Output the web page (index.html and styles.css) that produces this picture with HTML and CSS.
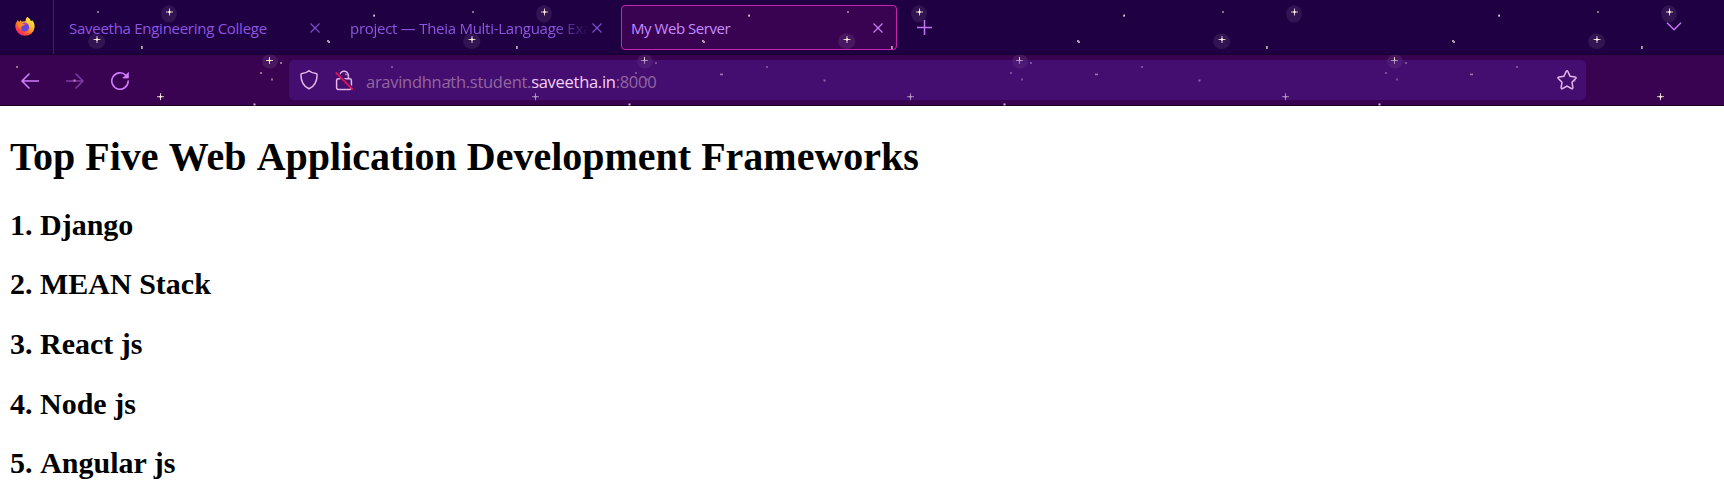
FILE: index.html
```html
<!DOCTYPE html>
<html lang="en">
<head>
<meta charset="utf-8">
<title>My Web Server</title>
<link rel="stylesheet" href="styles.css">
</head>
<body>
<header class="chrome">
  <svg class="stars" width="1724" height="106" aria-hidden="true">
    <defs>
      <g id="cross"><path d="M-3 0H4M.5 -3.5V3.5" stroke="#e0bfca" stroke-width="1"/><path d="M-1 0H2M.5 -1.5V1.5" stroke="#fff6d8" stroke-width="1.1"/></g>
      <pattern id="sky" width="375" height="106" patternUnits="userSpaceOnUse">
        <ellipse cx="169" cy="13.8" rx="7.8" ry="8.6" fill="#fff" opacity=".08"/>
        <ellipse cx="96.7" cy="41.2" rx="8.6" ry="7.8" fill="#fff" opacity=".08"/>
        <ellipse cx="270" cy="61.5" rx="7.8" ry="7" fill="#fff" opacity=".08"/>
        <use href="#cross" x="169" y="12"/>
        <use href="#cross" x="96.5" y="39.5"/>
        <use href="#cross" x="269" y="60.5"/>
        <use href="#cross" x="160" y="96.7"/>
        <g fill="#e0c6cf">
          <rect x="97" y="11" width="2" height="2" opacity=".55"/>
          <rect x="141" y="46" width="1.8" height="3" opacity=".8"/>
          <path d="M327 40h2v1h1v2h-2v-1h-1z" opacity=".75"/>
          <rect x="373.2" y="14.6" width="1.8" height="2"/>
          <rect x="280" y="62" width="2" height="2" opacity=".55"/>
          <rect x="260" y="72" width="2" height="2" opacity=".55"/>
          <rect x="271" y="78.5" width="2" height="2" opacity=".55"/>
          <rect x="16" y="66" width="2" height="2" opacity=".55"/>
          <rect x="73.5" y="79.5" width="2" height="2" opacity=".75"/>
          <rect x="345" y="73.6" width="3" height="1.6" opacity=".9"/>
          <rect x="253.5" y="103.5" width="2" height="2" opacity=".9"/>
        </g>
      </pattern>
    </defs>
    <rect width="1724" height="106" fill="url(#sky)"/>
  </svg>

  <div class="tabbar">
    <div class="view">
      <svg width="20" height="20" viewBox="0 0 20 20">
        <defs>
          <linearGradient id="fire" x1=".85" y1=".1" x2=".2" y2=".95">
            <stop offset="0" stop-color="#fff044"/><stop offset=".35" stop-color="#ffb82e"/><stop offset=".65" stop-color="#ff6a2c"/><stop offset="1" stop-color="#f5156c"/>
          </linearGradient>
        </defs>
        <path d="M12.300 0C14.600 1.400 15.600 2.800 16 4.300L17.200 3.200C19 5.100 19.800 7.600 19.600 10.200A9.700 9.700 0 0 1 .3 10C.3 7.300 1 5.700 2.200 4.300L2.700 3.100L4.200 5L5.600 3.300L6.700 4.700C8.600 4.300 10 4.500 10.600 4.300C10.500 2.500 11.200 1 12.300 0Z" fill="url(#fire)"/>
        <circle cx="9.800" cy="10.300" r="4.300" fill="#6b45d9"/>
        <path d="M7 6.600C9 4.700 12.200 5.200 13.600 8.300C12.400 7.200 11 7.200 10.200 8C9 9 8 8 5.600 8.700Z" fill="#b03bc7"/>
        <path d="M3 5.500L6.600 4.700C7 6.200 8.200 6.900 9.800 7.300C9.600 8.600 7.800 8.600 6.800 9.300C6 10 6 11.500 6.700 12.600C4 11.500 2.500 8.500 3 5.500Z" fill="#ff8a24"/>
      </svg>
    </div>
    <div class="tab tab-first"><span class="label">Saveetha Engineering College</span>
      <svg class="close" viewBox="0 0 10 10"><path d="M.5 .5l9 9M9.500 .5l-9 9"/></svg></div>
    <div class="tab tab-second"><span class="label fade">project — Theia Multi-Language Exa</span>
      <svg class="close" viewBox="0 0 10 10"><path d="M.5 .5l9 9M9.500 .5l-9 9"/></svg></div>
    <div class="tab active"><span class="label">My Web Server</span>
      <svg class="close" viewBox="0 0 10 10"><path d="M.5 .5l9 9M9.500 .5l-9 9"/></svg></div>
    <svg class="plus" width="15" height="15" viewBox="0 0 15 15"><path d="M0 7.500h15M7.500 0v15"/></svg>
    <svg class="chevron" width="16" height="9" viewBox="0 0 16 9"><path d="M1 .8l7 7 7-7"/></svg>
  </div>

  <div class="navbar">
    <svg class="nav back" width="18" height="16" viewBox="0 0 18 16"><path d="M17.500 8H1M8 1L1 8l7 7"/></svg>
    <svg class="nav forward" width="18" height="16" viewBox="0 0 18 16"><path d="M.5 8H17M10 1l7 7-7 7"/></svg>
    <svg class="nav reload" width="20" height="20" viewBox="0 0 20 20"><path d="M15.800 4.200A8.200 8.200 0 1 0 18.200 10"/><path class="tip" d="M18.400 1.800v5.200h-5.200z"/></svg>
    <div class="urlbar">
      <svg class="shield" width="20" height="22" viewBox="0 0 20 22"><path d="M10 1.700C11.500 3 14.500 4.300 17 4.500Q18.200 4.700 18.100 5.900C18 12.500 15 17.500 10 19.800C5 17.500 2 12.500 1.900 5.900Q1.800 4.700 3 4.500C5.500 4.300 8.500 3 10 1.700Z"/></svg>
      <svg class="lock" width="19" height="21" viewBox="0 0 19 21"><path d="M4.800 5.500a4.300 4.300 0 0 1 8.600 0v3.300M8 8.800h6.700q1.700 0 1.700 1.700v7.300q0 1.700-1.700 1.700H3.300q-1.700 0-1.700-1.700v-7.300q0-1.700 1.700-1.700h2"/><path class="gap" d="M2 2.500l16 16"/><path class="slash" d="M.8 2.600l17 17"/></svg>
      <div class="url">aravindhnath.student.<span class="host">saveetha.in</span>:8000</div>
      <svg class="bookmark" width="20" height="20" viewBox="0 0 20 20"><path d="M9.100 1.600q.9-1.500 1.800 0l2.200 4.700 5 .7q1.600.4.600 1.600l-3.700 3.700.9 5.200q0 1.600-1.500 1L10 16.100l-4.400 2.400q-1.500.6-1.500-1l.9-5.200-3.700-3.700q-1-1.200.6-1.600l5-.7z"/></svg>
    </div>
  </div>
</header>

<main class="page">
  <h1>Top Five <span class="word">Web</span> <span class="word">Application</span> Development Frameworks</h1>
  <h2>1. Django</h2>
  <h2>2. MEAN Stack</h2>
  <h2>3. React js</h2>
  <h2>4. Node js</h2>
  <h2>5. <span class="word">Angular</span> js</h2>
</main>
</body>
</html>
```
FILE: styles.css
```css
* { box-sizing: border-box; }
body { margin: 0; background: #fff; height: 499px; overflow: hidden; }
svg { display: block; flex: none; fill: none; }

.chrome {
  position: relative;
  height: 106px;
  font-family: "Open Sans", "Noto Sans", sans-serif;
  background: linear-gradient(#1f0042 54px, #14002b 54px, #14002b 55px, #3a0352 55px, #3a0352 105px, #16001f 105px);
}
.stars { position: absolute; left: 0; top: 0; }

.tabbar { display: flex; align-items: center; height: 55px; }
.view {
  position: relative;
  display: flex;
  align-items: center;
  width: 54px;
  height: 54px;
  padding-left: 15px;
  margin-bottom: 1px;
  border-right: 1px solid #3d1c72;
}
.tab {
  position: relative;
  display: flex;
  align-items: center;
  justify-content: space-between;
  height: 45px;
  color: #8d55e0;
  font-size: 15px;
  line-height: 20px;
}
.tab-first { width: 267px; padding-left: 15px; }
.tab-second { width: 281px; padding-left: 29px; }
.label { position: relative; white-space: nowrap; letter-spacing: -0.27px; padding-top: 1px; }
.fade {
  width: 241px;
  -webkit-mask-image: linear-gradient(90deg, #000 205px, transparent 240px);
  mask-image: linear-gradient(90deg, #000 205px, transparent 240px);
}
.close { position: relative; width: 10px; height: 10px; stroke: #7f4fcd; stroke-width: 1.1; }
.tab-first .close { margin-right: 1px; }
.active {
  position: static;
  width: 276px;
  margin-left: 19px;
  padding: 0 13px 0 9px;
  border: 1px solid #c526ae;
  border-radius: 4px;
  color: #c38dff;
  background: #3a0352;
}
.active .label { letter-spacing: -0.45px; }
.active .close { stroke: #cb85f5; }
.plus { position: relative; margin-left: 20px; stroke: #c573f5; stroke-width: 1.5; }
.chevron { position: relative; margin-left: auto; margin-right: 42px; margin-top: -2px; stroke: #c573f5; stroke-width: 1.5; }

.navbar { position: relative; display: flex; align-items: center; height: 51px; }
.nav { stroke: #d07cff; stroke-width: 1.6; stroke-linecap: round; stroke-linejoin: round; }
.back { margin-left: 21px; }
.forward { margin-left: 27px; opacity: .45; }
.reload { margin-left: 26px; }
.tip { fill: #d07cff; stroke-width: .8; }
.urlbar {
  display: flex;
  align-items: center;
  width: 1297px;
  height: 40px;
  margin-left: 159px;
  margin-bottom: 1px;
  padding: 0 9px 0 10px;
  border-radius: 5px;
  background: rgba(83, 30, 155, .42);
  stroke: #e5b5e8;
  stroke-width: 1.5;
}
.lock { margin-left: 16px; }
.gap { stroke: #450f73; stroke-width: 2; }
.slash { stroke: #e5134e; stroke-width: 1.8; }
.url {
  margin-left: 12px;
  padding-top: 4px;
  font-size: 16.500px;
  letter-spacing: -0.28px;
  line-height: 22px;
  color: #92669d;
  white-space: nowrap;
}
.host { color: #f3d0f5; }
.bookmark { margin-left: auto; }

.page {
  padding: 28px 10px 0;
  font-family: "Liberation Serif", "Times New Roman", serif;
  color: #000;
}
h1 { margin: 0 0 26.700px; font-size: 40px; line-height: 46px; }
h2 { margin: 0 0 24.700px; font-size: 30px; line-height: 35px; }
/* Keeps an even gap before words whose capital kerns tightly against a space. */
.word { margin-left: .005em; }
```
